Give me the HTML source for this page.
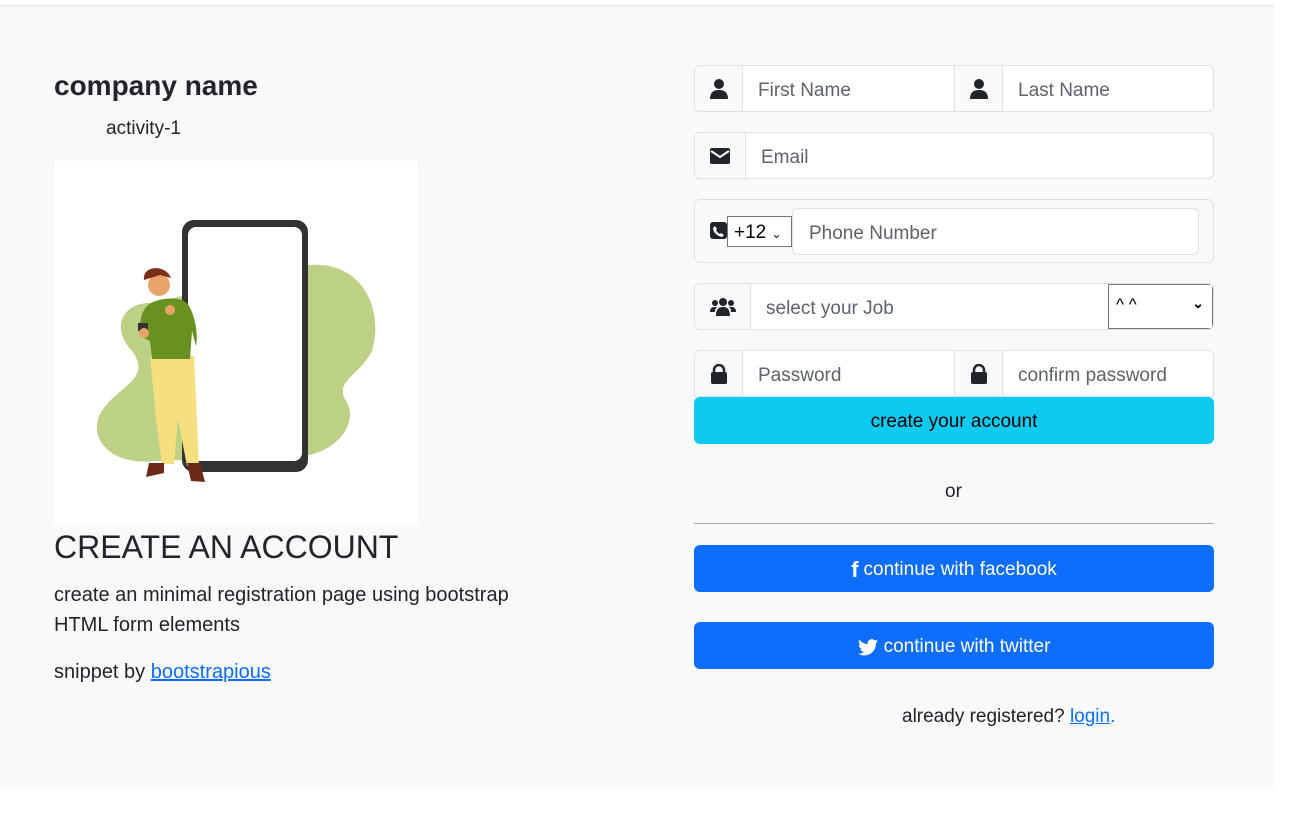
<!DOCTYPE html><html><head><style>
*{box-sizing:border-box}body{margin:0;width:1294px;height:814px;background:#fff;font-family:"Liberation Sans",sans-serif;color:#212529;position:relative;overflow:hidden}
.bg{position:absolute;left:0;top:5px;width:1274px;height:784px;background:#f8f9fa;border-top:1px solid #dee2e6}
.a{position:absolute}
.grp{position:absolute;border:1px solid #dee2e6;border-radius:6px;background:#fff;display:flex;overflow:hidden}
.ic{background:#f8f9fa;border-right:1px solid #dee2e6;display:flex;align-items:center;justify-content:center}
.in{display:flex;align-items:center;color:#5c636a;font-size:19px;padding-left:15px;padding-top:4px}
.btn{position:absolute;left:694px;width:520px;height:47px;border-radius:6px;display:flex;align-items:center;justify-content:center;font-size:19px;padding-top:3px}
a{color:#0d6efd}
</style></head><body>
<div class="bg"></div>
<div class="a" style="left:54px;top:70px;font-size:28px;font-weight:bold">company name</div>
<div class="a" style="left:106px;top:118px;font-size:19px">activity-1</div>
<svg class="a" style="left:54px;top:161px" width="364" height="364" viewBox="0 0 364 364">
<rect width="364" height="364" fill="#fff"/>
<path d="M255 104 C310 100 330 150 318 190 C305 215 280 220 292 240 C305 260 285 290 250 295 L100 300 C60 305 35 280 45 255 C60 225 100 220 78 190 C55 165 70 140 100 142 L250 104Z" fill="#bcd086"/>
<rect x="128" y="59" width="126" height="252" rx="12" fill="#333"/>
<rect x="134" y="66" width="114" height="234" rx="8" fill="#fff"/>
<path d="M96 195 L102 258 L108 303 L120 303 L124 258 L133 305 L145 305 L140 195 Z" fill="#f5df7e"/>
<path d="M93 145 C100 138 120 135 130 140 C140 145 145 175 142 185 L138 170 L136 198 L98 198 L96 180 L86 175 C85 160 88 150 93 145Z" fill="#68911f"/>
<rect x="84" y="162" width="10" height="8" fill="#333"/>
<circle cx="90" cy="172" r="5" fill="#e8a36a"/>
<circle cx="116" cy="149" r="5" fill="#e8a36a"/>
<circle cx="105" cy="124" r="11" fill="#e8a36a"/>
<path d="M90 119 C88 104 112 103 117 117 L106 114Z" fill="#7b2f16"/>
<path d="M95 302 L110 302 L110 312 L92 316Z M133 302 L146 302 L151 321 L137 320Z" fill="#6a2a15"/>
</svg>
<div class="a" style="left:54px;top:529px;font-size:32px">CREATE AN ACCOUNT</div>
<div class="a" style="left:54px;top:580px;font-size:20px;line-height:30px;width:480px">create an minimal registration page using bootstrap HTML form elements</div>
<div class="a" style="left:54px;top:661px;font-size:20px">snippet by <a href="#">bootstrapious</a></div>

<div class="grp" style="left:694px;top:65px;width:520px;height:47px">
<div class="ic" style="width:48px"><svg width="18" height="20" viewBox="0 0 18 20"><circle cx="9" cy="5" r="5" fill="#212529"/><path d="M0 20C0 13 4 11 9 11S18 13 18 20Z" fill="#212529"/></svg></div>
<div class="in" style="width:212px;border-right:1px solid #dee2e6">First Name</div>
<div class="ic" style="width:48px"><svg width="18" height="20" viewBox="0 0 18 20"><circle cx="9" cy="5" r="5" fill="#212529"/><path d="M0 20C0 13 4 11 9 11S18 13 18 20Z" fill="#212529"/></svg></div>
<div class="in">Last Name</div></div>
<div class="grp" style="left:694px;top:132px;width:520px;height:47px">
<div class="ic" style="width:51px"><svg width="20" height="16" viewBox="0 0 20 16"><rect width="20" height="16" rx="2" fill="#212529"/><path d="M1 3L10 9L19 3" stroke="#f8f9fa" stroke-width="2" fill="none"/></svg></div>
<div class="in">Email</div></div>
<div class="grp" style="left:694px;top:199px;width:520px;height:64px;background:#f8f9fa">
<svg class="a" style="left:15px;top:22px" width="17" height="17"><rect width="17" height="17" rx="3" fill="#212529"/><path d="M5 4 L7 7 L6 8 C7 10 8 11 10 12 L11 11 L14 13 L12 15 C7 14 3 10 3 6Z" fill="#f8f9fa"/></svg>
<div class="a" style="left:32px;top:16px;width:65px;height:31px;border:1px solid #767676;background:#fff;font-size:19px;padding:5px 0 0 6px;color:#000">+12 <span style="font-size:12px">&#8964;</span></div>
<div class="a" style="left:97px;top:8px;width:407px;height:47px;border:1px solid #dee2e6;border-radius:6px;background:#fff;color:#5c636a;font-size:19px;padding:14px 0 0 16px">Phone Number</div></div>
<div class="grp" style="left:694px;top:283px;width:520px;height:47px">
<div class="ic" style="width:56px"><svg width="26" height="18" viewBox="0 0 26 18"><circle cx="13" cy="4" r="4" fill="#212529"/><circle cx="5" cy="5" r="3" fill="#212529"/><circle cx="21" cy="5" r="3" fill="#212529"/><path d="M6 18C6 11 9 9 13 9S20 11 20 18Z M0 14C0 10 2 9 5 9L7 9C5 11 5 12 5 14Z M26 14C26 10 24 9 21 9L19 9C21 11 21 12 21 14Z" fill="#212529"/></svg></div>
<div class="in" style="width:357px">select your Job</div>
<div style="flex:1;border:1px solid #767676;font-size:17px;padding:10px 0 0 7px;position:relative;color:#000">^ ^<span style="position:absolute;right:8px;top:10px;font-size:14px;font-weight:bold">&#8964;</span></div></div>
<div class="grp" style="left:694px;top:350px;width:520px;height:47px;border-radius:6px 6px 0 0">
<div class="ic" style="width:48px"><svg width="16" height="20" viewBox="0 0 16 20"><path d="M3 9V6a5 5 0 0 1 10 0v3" stroke="#212529" stroke-width="2.5" fill="none"/><rect y="8" width="16" height="12" rx="2" fill="#212529"/></svg></div>
<div class="in" style="width:212px;border-right:1px solid #dee2e6">Password</div>
<div class="ic" style="width:48px"><svg width="16" height="20" viewBox="0 0 16 20"><path d="M3 9V6a5 5 0 0 1 10 0v3" stroke="#212529" stroke-width="2.5" fill="none"/><rect y="8" width="16" height="12" rx="2" fill="#212529"/></svg></div>
<div class="in">confirm password</div></div>
<div class="btn" style="top:397px;background:#0dcaf0;color:#000">create your account</div>
<div class="a" style="left:945px;top:481px;font-size:19px">or</div>
<div class="a" style="left:694px;top:523px;width:520px;height:1px;background:#aaa"></div>
<div class="btn" style="top:545px;background:#0d6efd;color:#fff"><b style="font-size:22px;margin-right:5px">f</b>continue with facebook</div>
<div class="btn" style="top:622px;background:#0d6efd;color:#fff"><svg width="20" height="17" viewBox="0 0 24 20" style="margin-right:6px"><path d="M24 2.4a10 10 0 0 1-2.8.8A5 5 0 0 0 23.3.4a10 10 0 0 1-3.1 1.2A4.9 4.9 0 0 0 11.8 6 14 14 0 0 1 1.7.9a4.9 4.9 0 0 0 1.5 6.6A4.900 4.900 0 0 1 1 6.9a4.9 4.9 0 0 0 3.9 4.8 5 5 0 0 1-2.2.1 4.9 4.9 0 0 0 4.6 3.4A9.900 9.900 0 0 1 0 17.300 14 14 0 0 0 7.500 19.5c9.100 0 14-7.500 14-14v-.6A10 10 0 0 0 24 2.400z" fill="#fff"/></svg>continue with twitter</div>
<div class="a" style="left:902px;top:706px;font-size:19px">already registered? <a href="#">login</a><span style="color:#0d6efd">.</span></div>
</body></html>
